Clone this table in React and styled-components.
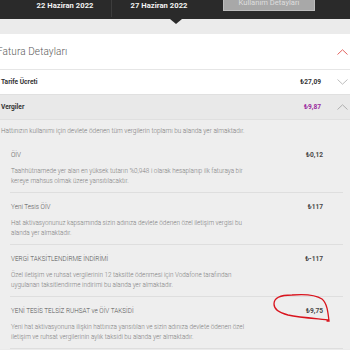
import React from "react";
import styled, { createGlobalStyle } from "styled-components";

const Global = createGlobalStyle`
  html, body { margin: 0; padding: 0; }
  body {
    width: 350px;
    height: 350px;
    overflow: hidden;
    background: #ebebeb;
    font-family: Roboto, "Open Sans", "DejaVu Sans", sans-serif;
  }
`;

const Page = styled.div`
  width: 350px;
  display: flex;
  flex-direction: column;
`;

const TopBar = styled.div`
  position: relative;
  height: 19px;
  background: #2a2a2a;
  display: flex;
  align-items: flex-start;
`;

const DateTab = styled.div`
  width: ${(p) => p.$w}px;
  margin-left: ${(p) => p.$ml || 0}px;
  height: 17px;
  text-align: center;
  color: #f4f4f4;
  font-weight: 700;
  font-size: 7.6px;
  line-height: 11px;
  letter-spacing: 0.05px;
`;

const TabDivider = styled.div`
  width: 1px;
  height: 17px;
  background: #3d3d3d;
`;

const Pointer = styled.div`
  position: absolute;
  left: 170px;
  top: 19px;
  width: 0;
  height: 0;
  border-left: 6px solid transparent;
  border-right: 6px solid transparent;
  border-top: 5px solid #2a2a2a;
`;

const UsageButton = styled.div`
  margin-left: 17px;
  width: 92px;
  height: 11px;
  box-sizing: border-box;
  background: #a8a8a8;
  border: 1px solid #bdbdbd;
  border-top: none;
  color: #dedede;
  font-size: 7.6px;
  line-height: 8px;
  display: flex;
  align-items: flex-end;
  justify-content: center;
  padding-bottom: 3px;
  overflow: hidden;
`;

const Band = styled.div`
  height: 15px;
  background: #ebebeb;
`;

const Card = styled.div`
  background: #ffffff;
  display: flex;
  flex-direction: column;
`;

const CardHeader = styled.div`
  height: 35px;
  border-bottom: 1px solid #e6e6e6;
  display: flex;
  align-items: center;
  justify-content: space-between;
  padding-right: 2px;
`;

const CardTitle = styled.div`
  margin-left: -3px;
  font-weight: 300;
  font-size: 10px;
  color: #595959;
  letter-spacing: 0.1px;
`;

const Row = styled.div`
  height: 24px;
  border-bottom: 1px solid #e0e0e0;
  background: ${(p) => (p.$open ? "#e9e9e9" : "#ffffff")};
  display: flex;
  align-items: center;
  padding-left: 1px;
  padding-right: 2px;
`;

const RowLabel = styled.div`
  flex: 1;
  font-weight: 700;
  font-size: 6.6px;
  color: #333333;
`;

const RowValue = styled.div`
  font-weight: 700;
  font-size: 6.6px;
  color: ${(p) => p.$color || "#333333"};
`;

const ChevronBox = styled.div`
  margin-left: 16px;
  width: 11px;
  height: 7px;
  display: flex;
  align-items: center;
  justify-content: center;
`;

const Panel = styled.div`
  background: #eeeeee;
  padding-top: 6px;
  display: flex;
  flex-direction: column;
`;

const Intro = styled.div`
  padding-left: 1px;
  font-size: 6.45px;
  font-weight: 300;
  line-height: 10px;
  color: #7a7a7a;
  margin-bottom: 5px;
  white-space: nowrap;
`;

const SubItem = styled.div`
  margin-left: 10px;
  margin-right: 7px;
  padding: 9px 20px 6px 1px;
  border-bottom: 1px solid #dedede;
  display: flex;
  flex-direction: column;
  gap: 6px;
`;

const SubHead = styled.div`
  display: flex;
  align-items: center;
  justify-content: space-between;
  height: 10px;
`;

const SubTitle = styled.div`
  font-size: 6.4px;
  font-weight: 300;
  color: #555555;
`;

const SubValue = styled.div`
  position: relative;
  font-weight: 700;
  font-size: 6.6px;
  color: #484848;
`;

const SubDesc = styled.div`
  font-size: 6.34px;
  font-weight: 300;
  line-height: 10px;
  color: #808080;
  white-space: nowrap;
`;

const Circle = styled.svg`
  position: absolute;
  right: -9px;
  top: -15px;
  width: 60px;
  height: 32px;
  overflow: visible;
  pointer-events: none;
`;

function Chevron({ up, color }) {
  return (
    <svg width="11" height="6" viewBox="0 0 11 6">
      <polyline
        points={up ? "0.5,5.5 5.5,0.8 10.5,5.5" : "0.5,0.5 5.5,5.2 10.5,0.5"}
        fill="none"
        stroke={color}
        strokeWidth="0.9"
      />
    </svg>
  );
}

const items = [
  {
    title: "ÖİV",
    value: "₺0,12",
    desc: [
      "Taahhütnamede yer alan en yüksek tutarın %0,948 i olarak hesaplanıp ilk faturaya bir",
      "kereye mahsus olmak üzere yansıtılacaktır.",
    ],
  },
  {
    title: "Yeni Tesis ÖİV",
    value: "₺117",
    desc: [
      "Hat aktivasyonunuz kapsamında sizin adınıza devlete ödenen özel iletişim vergisi bu",
      "alanda yer almaktadır.",
    ],
  },
  {
    title: "VERGİ TAKSİTLENDİRME İNDİRİMİ",
    value: "₺-117",
    desc: [
      "Özel iletişim ve ruhsat vergilerinin 12 taksitte ödenmesi için Vodafone tarafından",
      "uygulanan taksitlendirme indirimi bu alanda yer almaktadır.",
    ],
  },
  {
    title: "YENİ TESİS TELSİZ RUHSAT ve ÖİV TAKSİDİ",
    value: "₺9,75",
    circled: true,
    desc: [
      "Yeni hat aktivasyonuna ilişkin hattınıza yansıtılan ve sizin adınıza devlete ödenen özel",
      "iletişim ve ruhsat vergilerinin aylık taksidi bu alanda yer almaktadır.",
    ],
  },
];

export default function App() {
  return (
    <Page>
      <Global />
      <TopBar>
        <DateTab $w={92} $ml={19}>22 Haziran 2022</DateTab>
        <TabDivider />
        <DateTab $w={94}>27 Haziran 2022</DateTab>
        <UsageButton>Kullanım Detayları</UsageButton>
        <Pointer />
      </TopBar>
      <Band />
      <Card>
        <CardHeader>
          <CardTitle>Fatura Detayları</CardTitle>
          <Chevron up color="#e0524f" />
        </CardHeader>
        <Row>
          <RowLabel>Tarife Ücreti</RowLabel>
          <RowValue>₺27,09</RowValue>
          <ChevronBox>
            <Chevron color="#b5b5b5" />
          </ChevronBox>
        </Row>
        <Row $open>
          <RowLabel>Vergiler</RowLabel>
          <RowValue $color="#9a2a9e">₺9,87</RowValue>
          <ChevronBox>
            <Chevron up color="#a8a8a8" />
          </ChevronBox>
        </Row>
        <Panel>
          <Intro>
            Hattınızın kullanımı için devlete ödenen tüm vergilerin toplamı bu alanda yer almaktadır.
          </Intro>
          {items.map((it) => (
            <SubItem key={it.title}>
              <SubHead>
                <SubTitle>{it.title}</SubTitle>
                <SubValue>
                  {it.value}
                  {it.circled && (
                    <Circle viewBox="0 0 60 32">
                      <path
                        d="M57 28 C52 27, 30 26, 16 23 C8 21, 2 17, 2 12 C2 6, 8 3, 20 3 C32 2, 44 3, 50 7 C55 11, 56 20, 57 29 L55 29"
                        fill="none"
                        stroke="#d9141e"
                        strokeWidth="1.3"
                        strokeLinecap="round"
                      />
                    </Circle>
                  )}
                </SubValue>
              </SubHead>
              <SubDesc>
                {it.desc.map((d) => (
                  <div key={d}>{d}</div>
                ))}
              </SubDesc>
            </SubItem>
          ))}
        </Panel>
      </Card>
    </Page>
  );
}
